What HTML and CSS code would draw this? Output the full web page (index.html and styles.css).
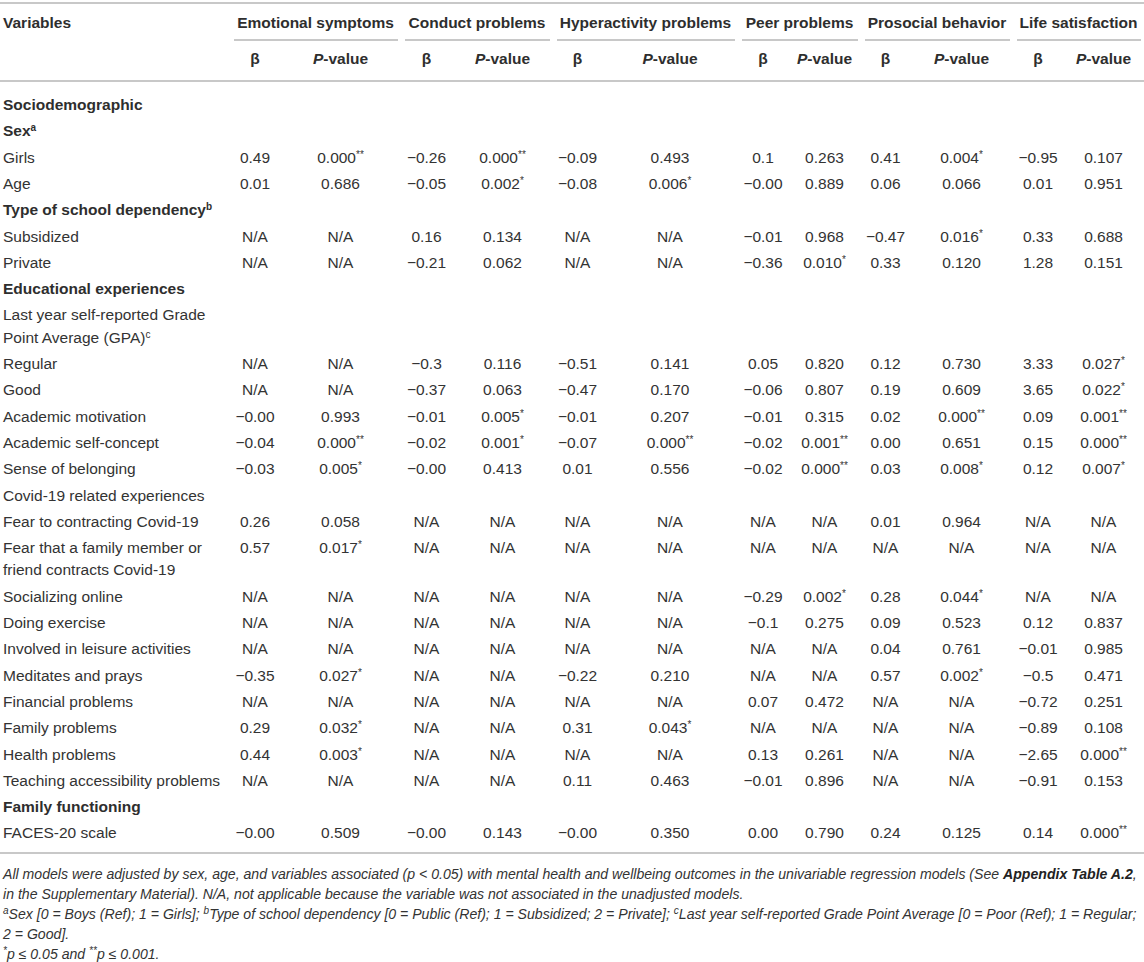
FILE: index.html
```html
<!DOCTYPE html>
<html lang="en">
<head>
<meta charset="utf-8">
<title>Adjusted regression models</title>
<link rel="stylesheet" href="styles.css">
</head>
<body>
<div class="wrap">
<table class="tbl">
<colgroup>
<col class="c-var"><col class="c-b"><col class="c-e"><col class="c-b1"><col class="c-c"><col class="c-b2"><col class="c-h"><col class="c-b"><col class="c-p"><col class="c-b2"><col class="c-s"><col class="c-b"><col class="c-l">
</colgroup>
<thead>
<tr class="h1">
<th class="var">Variables</th>
<th colspan="2" class="grp"><div class="grp-in">Emotional symptoms</div></th>
<th colspan="2" class="grp"><div class="grp-in">Conduct problems</div></th>
<th colspan="2" class="grp"><div class="grp-in">Hyperactivity problems</div></th>
<th colspan="2" class="grp"><div class="grp-in">Peer problems</div></th>
<th colspan="2" class="grp"><div class="grp-in">Prosocial behavior</div></th>
<th colspan="2" class="grp"><div class="grp-in">Life satisfaction</div></th>
</tr>
<tr class="h2">
<th></th>
<th>β</th><th><i>P</i>-value</th>
<th>β</th><th><i>P</i>-value</th>
<th>β</th><th><i>P</i>-value</th>
<th>β</th><th><i>P</i>-value</th>
<th>β</th><th><i>P</i>-value</th>
<th>β</th><th><i>P</i>-value</th>
</tr>
</thead>
<tbody>
<tr class="first"><td class="sec">Sociodemographic</td><td></td><td></td><td></td><td></td><td></td><td></td><td></td><td></td><td></td><td></td><td></td><td></td></tr>
<tr><td class="sec">Sex<sup>a</sup></td><td></td><td></td><td></td><td></td><td></td><td></td><td></td><td></td><td></td><td></td><td></td><td></td></tr>
<tr><td>Girls</td><td>0.49</td><td>0.000<sup>**</sup></td><td>−0.26</td><td>0.000<sup>**</sup></td><td>−0.09</td><td>0.493</td><td>0.1</td><td>0.263</td><td>0.41</td><td>0.004<sup>*</sup></td><td>−0.95</td><td>0.107</td></tr>
<tr><td>Age</td><td>0.01</td><td>0.686</td><td>−0.05</td><td>0.002<sup>*</sup></td><td>−0.08</td><td>0.006<sup>*</sup></td><td>−0.00</td><td>0.889</td><td>0.06</td><td>0.066</td><td>0.01</td><td>0.951</td></tr>
<tr><td class="sec">Type of school dependency<sup>b</sup></td><td></td><td></td><td></td><td></td><td></td><td></td><td></td><td></td><td></td><td></td><td></td><td></td></tr>
<tr><td>Subsidized</td><td>N/A</td><td>N/A</td><td>0.16</td><td>0.134</td><td>N/A</td><td>N/A</td><td>−0.01</td><td>0.968</td><td>−0.47</td><td>0.016<sup>*</sup></td><td>0.33</td><td>0.688</td></tr>
<tr><td>Private</td><td>N/A</td><td>N/A</td><td>−0.21</td><td>0.062</td><td>N/A</td><td>N/A</td><td>−0.36</td><td>0.010<sup>*</sup></td><td>0.33</td><td>0.120</td><td>1.28</td><td>0.151</td></tr>
<tr><td class="sec">Educational experiences</td><td></td><td></td><td></td><td></td><td></td><td></td><td></td><td></td><td></td><td></td><td></td><td></td></tr>
<tr><td>Last year self-reported Grade Point Average (GPA)<sup>c</sup></td><td></td><td></td><td></td><td></td><td></td><td></td><td></td><td></td><td></td><td></td><td></td><td></td></tr>
<tr><td>Regular</td><td>N/A</td><td>N/A</td><td>−0.3</td><td>0.116</td><td>−0.51</td><td>0.141</td><td>0.05</td><td>0.820</td><td>0.12</td><td>0.730</td><td>3.33</td><td>0.027<sup>*</sup></td></tr>
<tr><td>Good</td><td>N/A</td><td>N/A</td><td>−0.37</td><td>0.063</td><td>−0.47</td><td>0.170</td><td>−0.06</td><td>0.807</td><td>0.19</td><td>0.609</td><td>3.65</td><td>0.022<sup>*</sup></td></tr>
<tr><td>Academic motivation</td><td>−0.00</td><td>0.993</td><td>−0.01</td><td>0.005<sup>*</sup></td><td>−0.01</td><td>0.207</td><td>−0.01</td><td>0.315</td><td>0.02</td><td>0.000<sup>**</sup></td><td>0.09</td><td>0.001<sup>**</sup></td></tr>
<tr><td>Academic self-concept</td><td>−0.04</td><td>0.000<sup>**</sup></td><td>−0.02</td><td>0.001<sup>*</sup></td><td>−0.07</td><td>0.000<sup>**</sup></td><td>−0.02</td><td>0.001<sup>**</sup></td><td>0.00</td><td>0.651</td><td>0.15</td><td>0.000<sup>**</sup></td></tr>
<tr><td>Sense of belonging</td><td>−0.03</td><td>0.005<sup>*</sup></td><td>−0.00</td><td>0.413</td><td>0.01</td><td>0.556</td><td>−0.02</td><td>0.000<sup>**</sup></td><td>0.03</td><td>0.008<sup>*</sup></td><td>0.12</td><td>0.007<sup>*</sup></td></tr>
<tr><td>Covid-19 related experiences</td><td></td><td></td><td></td><td></td><td></td><td></td><td></td><td></td><td></td><td></td><td></td><td></td></tr>
<tr><td>Fear to contracting Covid-19</td><td>0.26</td><td>0.058</td><td>N/A</td><td>N/A</td><td>N/A</td><td>N/A</td><td>N/A</td><td>N/A</td><td>0.01</td><td>0.964</td><td>N/A</td><td>N/A</td></tr>
<tr><td>Fear that a family member or friend contracts Covid-19</td><td>0.57</td><td>0.017<sup>*</sup></td><td>N/A</td><td>N/A</td><td>N/A</td><td>N/A</td><td>N/A</td><td>N/A</td><td>N/A</td><td>N/A</td><td>N/A</td><td>N/A</td></tr>
<tr><td>Socializing online</td><td>N/A</td><td>N/A</td><td>N/A</td><td>N/A</td><td>N/A</td><td>N/A</td><td>−0.29</td><td>0.002<sup>*</sup></td><td>0.28</td><td>0.044<sup>*</sup></td><td>N/A</td><td>N/A</td></tr>
<tr><td>Doing exercise</td><td>N/A</td><td>N/A</td><td>N/A</td><td>N/A</td><td>N/A</td><td>N/A</td><td>−0.1</td><td>0.275</td><td>0.09</td><td>0.523</td><td>0.12</td><td>0.837</td></tr>
<tr><td>Involved in leisure activities</td><td>N/A</td><td>N/A</td><td>N/A</td><td>N/A</td><td>N/A</td><td>N/A</td><td>N/A</td><td>N/A</td><td>0.04</td><td>0.761</td><td>−0.01</td><td>0.985</td></tr>
<tr><td>Meditates and prays</td><td>−0.35</td><td>0.027<sup>*</sup></td><td>N/A</td><td>N/A</td><td>−0.22</td><td>0.210</td><td>N/A</td><td>N/A</td><td>0.57</td><td>0.002<sup>*</sup></td><td>−0.5</td><td>0.471</td></tr>
<tr><td>Financial problems</td><td>N/A</td><td>N/A</td><td>N/A</td><td>N/A</td><td>N/A</td><td>N/A</td><td>0.07</td><td>0.472</td><td>N/A</td><td>N/A</td><td>−0.72</td><td>0.251</td></tr>
<tr><td>Family problems</td><td>0.29</td><td>0.032<sup>*</sup></td><td>N/A</td><td>N/A</td><td>0.31</td><td>0.043<sup>*</sup></td><td>N/A</td><td>N/A</td><td>N/A</td><td>N/A</td><td>−0.89</td><td>0.108</td></tr>
<tr><td>Health problems</td><td>0.44</td><td>0.003<sup>*</sup></td><td>N/A</td><td>N/A</td><td>N/A</td><td>N/A</td><td>0.13</td><td>0.261</td><td>N/A</td><td>N/A</td><td>−2.65</td><td>0.000<sup>**</sup></td></tr>
<tr><td>Teaching accessibility problems</td><td>N/A</td><td>N/A</td><td>N/A</td><td>N/A</td><td>0.11</td><td>0.463</td><td>−0.01</td><td>0.896</td><td>N/A</td><td>N/A</td><td>−0.91</td><td>0.153</td></tr>
<tr><td class="sec">Family functioning</td><td></td><td></td><td></td><td></td><td></td><td></td><td></td><td></td><td></td><td></td><td></td><td></td></tr>
<tr class="last"><td>FACES-20 scale</td><td>−0.00</td><td>0.509</td><td>−0.00</td><td>0.143</td><td>−0.00</td><td>0.350</td><td>0.00</td><td>0.790</td><td>0.24</td><td>0.125</td><td>0.14</td><td>0.000<sup>**</sup></td></tr>
</tbody>
</table>
<div class="notes">
<p>All models were adjusted by sex, age, and variables associated (p &lt; 0.05) with mental health and wellbeing outcomes in the univariable regression models (See <b>Appendix Table A.2</b>,<br>in the Supplementary Material). N/A, not applicable because the variable was not associated in the unadjusted models.</p>
<p><sup>a</sup>Sex [0 = Boys (Ref); 1 = Girls]; <sup>b</sup>Type of school dependency [0 = Public (Ref); 1 = Subsidized; 2 = Private]; <sup>c</sup>Last year self-reported Grade Point Average [0 = Poor (Ref); 1 = Regular;<br>2 = Good].</p>
<p><sup>*</sup>p ≤ 0.05 and <sup>**</sup>p ≤ 0.001.</p>
</div>
</div>
</body>
</html>
```
FILE: styles.css
```css
html, body {
  margin: 0;
  padding: 0;
  background: #ffffff;
}
body {
  font-family: "Liberation Sans", Arial, Helvetica, sans-serif;
  color: #333333;
}
.wrap {
  width: 1144px;
  padding-top: 2px;
}
.tbl {
  width: 1144px;
  table-layout: fixed;
  border-collapse: collapse;
  font-size: 15.5px;
  line-height: 22.3px;
}
.c-var { width: 230px; }
.c-b { width: 50px; }
.c-b1 { width: 51px; }
.c-b2 { width: 49px; }
.c-e { width: 121px; }
.c-c { width: 101px; }
.c-h { width: 136px; }
.c-p { width: 73px; }
.c-s { width: 103px; }
.c-l { width: 81px; }

.tbl th {
  font-weight: bold;
  color: #2e2e2e;
  text-align: center;
  vertical-align: top;
}
.tbl tr.h1 th {
  border-top: 2px solid #c8c8c8;
  padding: 7.5px 3.5px 0;
}
.tbl tr.h1 th.var {
  text-align: left;
  padding-left: 3px;
}
.grp-in {
  padding-bottom: 5.5px;
  border-bottom: 2px solid #c8c8c8;
  white-space: nowrap;
}
.tbl tr.h2 th {
  padding: 7px 3.5px 9px;
  border-bottom: 2px solid #c8c8c8;
}
.tbl td {
  padding: 2px 3.5px;
  text-align: center;
  vertical-align: top;
  font-weight: normal;
}
.tbl td:first-child {
  text-align: left;
  padding-left: 3px;
}
.tbl td.sec {
  font-weight: bold;
  color: #2e2e2e;
}
.tbl tr.first td {
  padding-top: 12.5px;
}
.tbl tr.last td {
  padding-bottom: 7.5px;
  border-bottom: 2px solid #c8c8c8;
}
.tbl sup {
  font-size: 10px;
  line-height: 0;
  vertical-align: 5px;
}
.notes {
  padding: 10px 0 0 3px;
  font-style: italic;
  font-size: 14.1px;
  line-height: 20px;
  color: #333333;
}
.notes p {
  margin: 0;
}
.notes b {
  font-weight: bold;
  color: #222222;
}
.notes sup {
  font-size: 10px;
  line-height: 0;
  vertical-align: 5px;
}
```
